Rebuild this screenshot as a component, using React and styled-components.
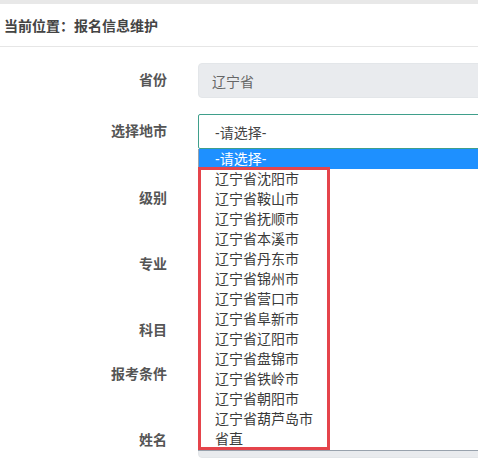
import React, { useState } from 'react';
import styled, { createGlobalStyle } from 'styled-components';

const GlobalStyle = createGlobalStyle`
  html, body {
    margin: 0;
    padding: 0;
    background: #fff;
    overflow: hidden;
  }
  body {
    font-family: "Liberation Sans", "Noto Sans CJK SC", sans-serif;
    font-size: 14px;
    color: #333;
  }
`;

const cities = [
  '辽宁省沈阳市', '辽宁省鞍山市', '辽宁省抚顺市', '辽宁省本溪市', '辽宁省丹东市',
  '辽宁省锦州市', '辽宁省营口市', '辽宁省阜新市', '辽宁省辽阳市', '辽宁省盘锦市',
  '辽宁省铁岭市', '辽宁省朝阳市', '辽宁省葫芦岛市', '省直',
];

// Styled components
const Page = styled.div`
  width: 478px;
  height: 460px;
  overflow: hidden;
`;

const TopStrip = styled.div`
  height: 4px;
  background: #e8e8e8;
`;

const Header = styled.div`
  height: 42px;
  display: flex;
  align-items: center;
  padding-left: 4px;
  border-bottom: 1px solid #e6e6e6;
  font-size: 14px;
  font-weight: 700;
  color: #444;
`;

const Form = styled.div`
  padding-top: 16px;
`;

const Row = styled.div`
  display: flex;
  align-items: flex-start;
  margin-bottom: ${(p) => p.$space || 16}px;
  position: relative;
`;

const Label = styled.div`
  width: 167px;
  flex-shrink: 0;
  text-align: right;
  padding-top: 7px;
  line-height: 20px;
  font-weight: 700;
  color: #555;
`;

const Control = styled.div`
  margin-left: 31px;
  width: 340px;
  flex-shrink: 0;
  position: relative;
`;

const ReadonlyInput = styled.div`
  box-sizing: border-box;
  height: 35px;
  display: flex;
  align-items: center;
  padding-left: 13px;
  background: #e9ebee;
  border: 1px solid #e3e6e9;
  border-radius: 4px;
  color: #666;
`;

const SelectBox = styled.div`
  box-sizing: border-box;
  height: 35px;
  display: flex;
  align-items: center;
  padding-left: 16px;
  background: #fff;
  border: 1px solid ${(p) => (p.$open ? '#3f9f8b' : '#d5d5d5')};
  border-radius: 2px;
  color: #444;
`;

const Dropdown = styled.div`
  position: absolute;
  top: 35px;
  left: 0;
  right: 0;
  background: #fff;
  border: 1px solid #98a2ad;
  border-top: none;
  padding-bottom: 1px;
  z-index: 5;
`;

const Option = styled.div`
  height: 20px;
  line-height: 20px;
  padding-left: 16px;
  white-space: nowrap;
  color: ${(p) => (p.$active ? '#fff' : '#3a3a3a')};
  background: ${(p) => (p.$active ? '#1e90ff' : 'transparent')};
`;

const Highlight = styled.div`
  position: absolute;
  left: -1px;
  top: 18px;
  width: 132px;
  height: 283px;
  box-sizing: border-box;
  border: 3px solid #e5444b;
  pointer-events: none;
`;

const App = () => {
  const [open] = useState(true);

  // fields below the open list are covered by it, so they show no value
  return (
    <Page>
      <GlobalStyle />
      <TopStrip />
      <Header>当前位置：报名信息维护</Header>
      <Form>
        <Row>
          <Label>省份</Label>
          <Control>
            <ReadonlyInput>辽宁省</ReadonlyInput>
          </Control>
        </Row>
        <Row $space={32}>
          <Label>选择地市</Label>
          <Control>
            <SelectBox $open={open}>-请选择-</SelectBox>
            {open && (
              <Dropdown>
                <Option $active>-请选择-</Option>
                {cities.map((c) => (
                  <Option key={c}>{c}</Option>
                ))}
                <Highlight />
              </Dropdown>
            )}
          </Control>
        </Row>
        <Row $space={31}>
          <Label>级别</Label>
          <Control>
            <SelectBox />
          </Control>
        </Row>
        <Row $space={31}>
          <Label>专业</Label>
          <Control>
            <SelectBox />
          </Control>
        </Row>
        <Row $space={9}>
          <Label>科目</Label>
          <Control>
            <SelectBox />
          </Control>
        </Row>
        <Row $space={31}>
          <Label>报考条件</Label>
          <Control>
            <SelectBox />
          </Control>
        </Row>
        <Row>
          <Label>姓名</Label>
          <Control>
            <ReadonlyInput />
          </Control>
        </Row>
      </Form>
    </Page>
  );
};

export default App;
